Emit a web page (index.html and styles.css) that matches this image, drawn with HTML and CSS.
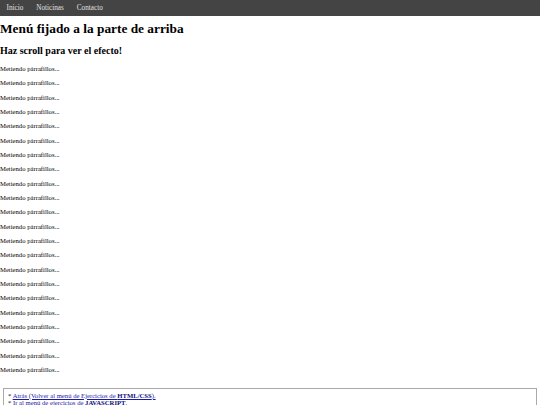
FILE: index.html
```html
<!DOCTYPE html>
<html lang="es">
<head>
<meta charset="utf-8">
<title>Menú fijado</title>
<link rel="stylesheet" href="styles.css">
</head>
<body>
<nav class="navbar">
  <a href="#" class="nav-link">Inicio</a>
  <a href="#" class="nav-link">Noticinas</a>
  <a href="#" class="nav-link">Contacto</a>
</nav>
<main class="main">
  <h1 class="title">Menú fijado a la parte de arriba</h1>
  <h2 class="subtitle">Haz scroll para ver el efecto!</h2>
  <p class="para">Metiendo párrafillos...</p>
  <p class="para">Metiendo párrafillos...</p>
  <p class="para">Metiendo párrafillos...</p>
  <p class="para">Metiendo párrafillos...</p>
  <p class="para">Metiendo párrafillos...</p>
  <p class="para">Metiendo párrafillos...</p>
  <p class="para">Metiendo párrafillos...</p>
  <p class="para">Metiendo párrafillos...</p>
  <p class="para">Metiendo párrafillos...</p>
  <p class="para">Metiendo párrafillos...</p>
  <p class="para">Metiendo párrafillos...</p>
  <p class="para">Metiendo párrafillos...</p>
  <p class="para">Metiendo párrafillos...</p>
  <p class="para">Metiendo párrafillos...</p>
  <p class="para">Metiendo párrafillos...</p>
  <p class="para">Metiendo párrafillos...</p>
  <p class="para">Metiendo párrafillos...</p>
  <p class="para">Metiendo párrafillos...</p>
  <p class="para">Metiendo párrafillos...</p>
  <p class="para">Metiendo párrafillos...</p>
  <p class="para">Metiendo párrafillos...</p>
  <p class="para">Metiendo párrafillos...</p>
</main>
<footer class="footer">
  <div class="footer-line">* <a href="#" class="footer-link">Atrás (Volver al menú de Ejercicios de <b>HTML/CSS</b>).</a></div>
  <div class="footer-line">* <a href="#" class="footer-link">Ir al menú de ejercicios de <b>JAVASCRIPT</b>.</a></div>
</footer>
</body>
</html>
```
FILE: styles.css
```css
html, body {
  margin: 0;
  padding: 0;
  background: #fff;
}
body {
  font-family: "Liberation Serif", "Times New Roman", serif;
  color: #000;
}
.navbar {
  display: flex;
  height: 16px;
  background: #444;
  align-items: center;
}
.nav-link {
  color: #e0e0e0;
  text-decoration: none;
  font-size: 7.2px;
  padding: 0 6.5px;
  line-height: 16px;
}
.main {
  padding-top: 0.1px;
}
.title {
  font-size: 13.33px;
  line-height: 15.3px;
  margin: 5px 0 8.9px;
  font-weight: bold;
}
.subtitle {
  font-size: 10px;
  line-height: 11.5px;
  margin: 8.3px 0;
  font-weight: bold;
}
.para {
  font-size: 6.67px;
  line-height: 7.67px;
  margin: 6.67px 0;
}
.footer {
  margin: 14.5px 3px 0;
  border: 1px solid #aaa;
  padding: 2.5px 4px;
  font-size: 6.67px;
  line-height: 7.3px;
}
.footer-link {
  color: #1a1aa6;
  text-decoration: underline;
}
.footer-link b {
  color: #0d0d80;
}
```
